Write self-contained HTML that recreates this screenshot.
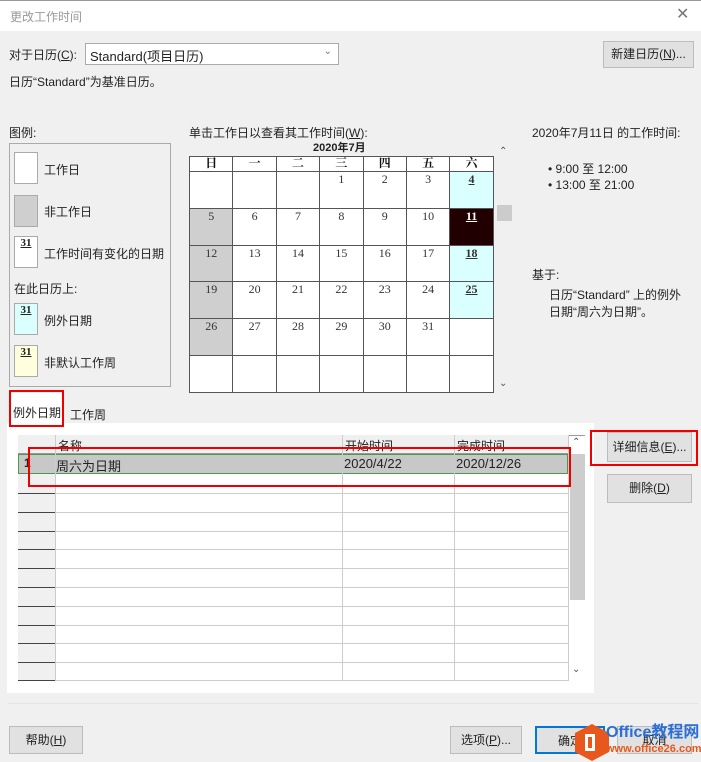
<!DOCTYPE html><html><head><meta charset="utf-8"><style>
*{margin:0;padding:0;box-sizing:border-box}
body{width:701px;height:760px;overflow:hidden;background:#f0f0f0;font-family:"Liberation Sans","Noto Sans CJK SC",sans-serif;font-size:12px;color:#222;position:relative}
.a{position:absolute;white-space:nowrap}
.btn{position:absolute;background:#e1e1e1;border:1px solid #bcbcbc;text-align:center;font-size:12px;white-space:nowrap}
.sw{position:absolute;left:14px;width:24px;height:32px;border:1px solid #aaa;font:bold 11px "Liberation Serif",serif;text-align:center;text-decoration:underline}
.cal{position:absolute;left:189px;top:156px;border-collapse:collapse;font-family:"Liberation Serif","Noto Serif CJK SC",serif;table-layout:fixed}
.cal td{border:1px solid #555;width:43.4px;height:36.8px;vertical-align:top;text-align:center;font-size:12px;line-height:14px;color:#333;background:#fff;padding:0}
.cal tr.h td{height:15px;font-weight:bold;font-size:12px;line-height:13px;color:#111}
.g{background:#cfcfcf!important}.c{background:#d9ffff!important}
.u{text-decoration:underline;font-weight:bold}
.red{position:absolute;border:2px solid #e00}
</style></head><body>
<div class="a" style="left:0;top:0;width:701px;height:31px;background:#fff;border-top:1px solid #999"></div>
<div class="a" style="left:10px;top:8px;color:#999;font-size:12px">更改工作时间</div>
<div class="a" style="left:676px;top:4px;color:#777;font-size:16px">✕</div>
<div class="a" style="left:9px;top:46px">对于日历(<u>C</u>):</div>
<div class="a" style="left:85px;top:43px;width:254px;height:22px;background:#fff;border:1px solid #aaa;padding:2px 4px;font-size:13px">Standard(项目日历)<span style="position:absolute;right:6px;top:2px;color:#777;font-size:10px">⌄</span></div>
<div class="btn" style="left:603px;top:41px;width:91px;height:27px;line-height:25px">新建日历(<u>N</u>)...</div>
<div class="a" style="left:9px;top:73px;font-size:12px">日历“Standard”为基准日历。</div>
<div class="a" style="left:9px;top:124px">图例:</div>
<div class="a" style="left:9px;top:143px;width:162px;height:244px;border:1px solid #aaa"></div>
<div class="sw" style="top:152px;background:#fff"></div><div class="a" style="left:44px;top:161px">工作日</div>
<div class="sw" style="top:195px;background:#cfcfcf"></div><div class="a" style="left:44px;top:203px">非工作日</div>
<div class="sw" style="top:236px;background:#fff">31</div><div class="a" style="left:44px;top:245px">工作时间有变化的日期</div>
<div class="a" style="left:14px;top:280px">在此日历上:</div>
<div class="sw" style="top:303px;background:#d9ffff">31</div><div class="a" style="left:44px;top:312px">例外日期</div>
<div class="sw" style="top:345px;background:#ffffdd">31</div><div class="a" style="left:44px;top:354px">非默认工作周</div>
<div class="a" style="left:189px;top:124px">单击工作日以查看其工作时间(<u>W</u>):</div>
<div class="a" style="left:313px;top:141px;font-weight:bold;font-size:11px;line-height:14px">2020年7月</div>
<table class="cal">
<tr class="h"><td>日</td><td>一</td><td>二</td><td>三</td><td>四</td><td>五</td><td>六</td></tr>
<tr><td></td><td></td><td></td><td>1</td><td>2</td><td>3</td><td class="c u">4</td></tr>
<tr><td class="g">5</td><td>6</td><td>7</td><td>8</td><td>9</td><td>10</td><td class="u" style="background:#200000;color:#fff">11</td></tr>
<tr><td class="g">12</td><td>13</td><td>14</td><td>15</td><td>16</td><td>17</td><td class="c u">18</td></tr>
<tr><td class="g">19</td><td>20</td><td>21</td><td>22</td><td>23</td><td>24</td><td class="c u">25</td></tr>
<tr><td class="g">26</td><td>27</td><td>28</td><td>29</td><td>30</td><td>31</td><td></td></tr>
<tr><td></td><td></td><td></td><td></td><td></td><td></td><td></td></tr>
</table>
<div class="a" style="left:499px;top:146px;color:#555;font-size:10px">⌃</div>
<div class="a" style="left:497px;top:205px;width:15px;height:16px;background:#ccc"></div>
<div class="a" style="left:499px;top:378px;color:#555;font-size:10px">⌄</div>
<div class="a" style="left:532px;top:124px">2020年7月11日 的工作时间:</div>
<div class="a" style="left:548px;top:161px;line-height:16px">• 9:00 至 12:00<br>• 13:00 至 21:00</div>
<div class="a" style="left:532px;top:266px">基于:</div>
<div class="a" style="left:549px;top:287px;line-height:17px">日历“Standard” 上的例外<br>日期“周六为日期”。</div>
<div class="a" style="left:7px;top:423px;width:587px;height:270px;background:#fff"></div>
<div class="a" style="left:9px;top:393px;width:54px;height:32px;background:#fff"></div>
<div class="a" style="left:13px;top:404px">例外日期</div>
<div class="a" style="left:70px;top:406px">工作周</div>
<div class="red" style="left:9px;top:390px;width:55px;height:37px"></div>
<div class="a" style="left:18px;top:435px;width:567px;height:245px;background:#fff;border-left:1px solid #999;border-top:1px solid #999"></div>
<div class="a" style="left:18px;top:435px;width:550px;height:19px;background:#f0f0f0;border-bottom:1px solid #999"></div>
<div class="a" style="left:58px;top:437px">名称</div><div class="a" style="left:345px;top:437px">开始时间</div><div class="a" style="left:457px;top:437px">完成时间</div>
<div class="a" style="left:18px;top:454px;width:550px;height:20px;background:#c8c8c8;border:1px solid #4a9a4a"></div>
<div class="a" style="left:24px;top:456px;font-weight:bold">1</div>
<div class="a" style="left:56px;top:456px;font-size:13px">周六为日期</div><div class="a" style="left:344px;top:456px;font-size:13px">2020/4/22</div><div class="a" style="left:456px;top:456px;font-size:13px">2020/12/26</div>
<div class="a" style="left:18px;top:474px;width:37px;height:206px;background:#f0f0f0"></div>
<svg class="a" style="left:18px;top:435px" width="551" height="246">
<g stroke="#ccc"><line x1="37.5" y1="0" x2="37.5" y2="246"/><line x1="324.5" y1="0" x2="324.5" y2="246"/><line x1="436.5" y1="0" x2="436.5" y2="246"/><line x1="550.5" y1="0" x2="550.5" y2="246"/>
<line x1="0" y1="58.5" x2="551" y2="58.5"/><line x1="0" y1="77.5" x2="551" y2="77.5"/><line x1="0" y1="96.5" x2="551" y2="96.5"/><line x1="0" y1="114.5" x2="551" y2="114.5"/><line x1="0" y1="133.5" x2="551" y2="133.5"/><line x1="0" y1="152.5" x2="551" y2="152.5"/><line x1="0" y1="171.5" x2="551" y2="171.5"/><line x1="0" y1="190.5" x2="551" y2="190.5"/><line x1="0" y1="208.5" x2="551" y2="208.5"/><line x1="0" y1="227.5" x2="551" y2="227.5"/><line x1="0" y1="245.5" x2="551" y2="245.5"/></g>
<g stroke="#444"><line x1="0" y1="58.5" x2="37" y2="58.5"/><line x1="0" y1="77.5" x2="37" y2="77.5"/><line x1="0" y1="96.5" x2="37" y2="96.5"/><line x1="0" y1="114.5" x2="37" y2="114.5"/><line x1="0" y1="133.5" x2="37" y2="133.5"/><line x1="0" y1="152.5" x2="37" y2="152.5"/><line x1="0" y1="171.5" x2="37" y2="171.5"/><line x1="0" y1="190.5" x2="37" y2="190.5"/><line x1="0" y1="208.5" x2="37" y2="208.5"/><line x1="0" y1="227.5" x2="37" y2="227.5"/><line x1="0" y1="245.5" x2="37" y2="245.5"/></g>
</svg>
<div class="a" style="left:570px;top:454px;width:15px;height:146px;background:#cdcdcd"></div>
<div class="a" style="left:572px;top:437px;color:#555;font-size:10px">⌃</div>
<div class="a" style="left:572px;top:664px;color:#555;font-size:10px">⌄</div>
<div class="red" style="left:28px;top:447px;width:543px;height:40px"></div>
<div class="btn" style="left:607px;top:432px;width:85px;height:30px;line-height:28px">详细信息(<u>E</u>)...</div>
<div class="btn" style="left:607px;top:474px;width:85px;height:29px;line-height:27px">删除(<u>D</u>)</div>
<div class="red" style="left:590px;top:430px;width:108px;height:36px"></div>
<div class="a" style="left:8px;top:703px;width:690px;height:1px;background:#e4e4e4"></div>
<div class="btn" style="left:9px;top:726px;width:74px;height:28px;line-height:26px">帮助(<u>H</u>)</div>
<div class="btn" style="left:450px;top:726px;width:72px;height:28px;line-height:26px">选项(<u>P</u>)...</div>
<div class="btn" style="left:535px;top:726px;width:70px;height:28px;line-height:26px;border:2px solid #0078d7">确定</div>
<div class="btn" style="left:617px;top:726px;width:75px;height:28px;line-height:26px">取消</div>
<svg class="a" style="left:572px;top:722px" width="40" height="40"><polygon points="20,2 37,11 37,30 20,39 3,30 3,11" fill="#e8581c"/><rect x="13" y="12" width="10" height="17" fill="#fff"/><rect x="16" y="15" width="4" height="11" fill="#e8581c"/></svg>
<div class="a" style="left:606px;top:724px;color:#2b6fd6;font-weight:bold;font-size:16px;line-height:18px">Office教程网</div>
<div class="a" style="left:606px;top:743px;color:#e8581c;font-size:11px;font-weight:bold;line-height:13px">www.office26.com</div>
</body></html>
